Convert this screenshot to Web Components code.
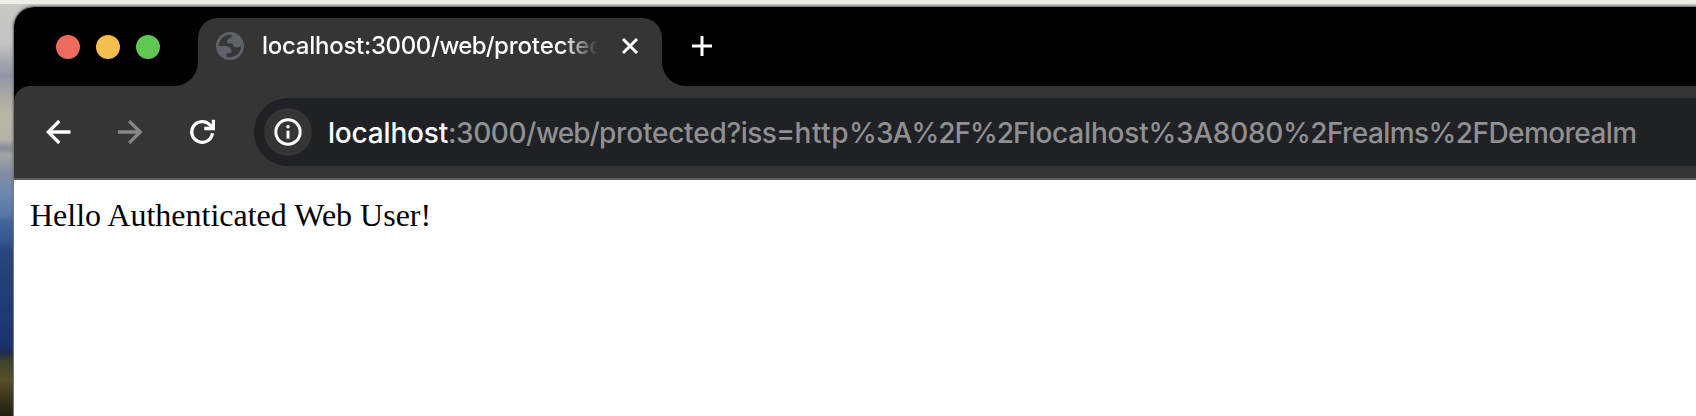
<!DOCTYPE html>
<html lang="en">
<head>
<meta charset="utf-8">
<title>localhost:3000/web/protected</title>
<style>
html,body{margin:0;height:100%;overflow:hidden}
body{font-family:Inter,"Liberation Sans",sans-serif}
</style>
</head>
<body>
<desk-top>
  <browser-window>
    <tab-strip slot="tabs"></tab-strip>
    <tool-bar slot="toolbar"></tool-bar>
    <page-view>Hello Authenticated Web User!</page-view>
  </browser-window>
</desk-top>
<script>
function define(name, html, ready) {
  customElements.define(name, class extends HTMLElement {
    constructor() {
      super();
      this.attachShadow({mode: 'open'}).innerHTML = html;
    }
    connectedCallback() { if (ready) ready(this); }
  });
}

// A run of text tracked so that it takes up the given width.
define('fit-text', '<style>:host{display:inline;white-space:pre}</style><slot></slot>', el => {
  const w = el.getBoundingClientRect().width;
  el.style.letterSpacing = ((+el.getAttribute('width') - w) / el.textContent.length) + 'px';
});

define('traffic-lights', `<style>
:host{display:flex;gap:16px}
i{width:24px;height:24px;border-radius:50%}
i:nth-of-type(1){background:#ed6a5f}
i:nth-of-type(2){background:#f5bf4f}
i:nth-of-type(3){background:#62c655}
</style><i></i><i></i><i></i>`);

define('browser-tab', `<style>
:host{position:relative;display:flex;align-items:center;box-sizing:border-box;width:464px;height:68px;padding:0 0 12px 18px;background:#353535;border-radius:20px 20px 0 0;color:#fff}
:host::before,:host::after{content:"";position:absolute;bottom:0;width:24px;height:24px}
:host::before{right:100%;background:radial-gradient(circle at 0 0,transparent 23.5px,#353535 24.5px)}
:host::after{left:100%;background:radial-gradient(circle at 100% 0,transparent 23.5px,#353535 24.5px)}
.globe{width:28px;height:28px;flex:none}
.title{width:336px;margin-left:18px;overflow:hidden;white-space:nowrap;font-size:24px;line-height:36px;font-weight:450;-webkit-mask:linear-gradient(90deg,#000 300px,transparent 336px);mask:linear-gradient(90deg,#000 300px,transparent 336px)}
.close{width:20px;height:20px;margin-left:22px;flex:none}
</style>
<svg class="globe" viewBox="2 2 20 20"><path fill="#5f6368" fill-rule="evenodd" d="M12 2C6.480 2 2 6.480 2 12s4.480 10 10 10 10-4.480 10-10S17.520 2 12 2zM4 12h4.400c3.407.022 4.922 1.730 4.543 5.127H9.488v2.470a8.004 8.004 0 0 0 10.498-8.083C19.327 12.504 18.332 13 17 13c-2.137 0-3.206-.916-3.206-2.750h-3.748c-.274-2.728.683-4.092 2.870-4.092 0-.975.327-1.597.811-1.970A8.004 8.004 0 0 0 4 12z"/></svg>
<div class="title"><slot></slot></div>
<svg class="close" viewBox="0 0 20 20"><path d="M3 3L17 17M17 3L3 17" stroke="#fff" stroke-width="3"/></svg>`);

define('tab-strip', `<style>
:host{display:flex;box-sizing:border-box;height:79px;padding:11px 0 0 42px;background:#000}
traffic-lights{margin-top:17px}
browser-tab{margin-left:38px}
.new{width:20px;height:20px;margin:18px 0 0 30px}
</style>
<traffic-lights></traffic-lights>
<browser-tab><fit-text width="102">localhost</fit-text><fit-text width="75.5">:3000/</fit-text><fit-text width="54.5">web/</fit-text><fit-text width="110">protected</fit-text></browser-tab>
<svg class="new" viewBox="0 0 20 20"><path d="M10 0V20M0 10H20" stroke="#fff" stroke-width="3"/></svg>`);

define('address-bar', `<style>
:host{display:flex;align-items:center;height:68px;background:#202124;border-radius:34px 0 0 34px;color:#8f9092}
.info{display:flex;align-items:center;justify-content:center;width:48px;height:48px;margin-left:10px;border-radius:50%;background:#353535}
.url{margin:1px 0 0 16px;font-size:28px;line-height:40px;font-weight:450;white-space:nowrap}
.host{color:#fff}
</style>
<span class="info"><svg width="28" height="28" viewBox="0 0 28 28"><circle cx="14" cy="14" r="12.200" fill="none" stroke="#fff" stroke-width="3"/><path d="M14 12.700V20.700" stroke="#fff" stroke-width="3"/><circle cx="14" cy="8.800" r="1.800" fill="#fff"/></svg></span>
<div class="url"><fit-text class="host" width="120">localhost</fit-text><fit-text width="88">:3000/</fit-text><fit-text width="63">web/</fit-text><fit-text width="127.5">protected</fit-text><fit-text width="68">?iss=</fit-text><fit-text width="54.5">http</fit-text><fit-text width="62.5">%3A</fit-text><fit-text width="117">%2F%2F</fit-text><fit-text width="120">localhost</fit-text><fit-text width="134.5">%3A8080</fit-text><fit-text width="145.5">%2Frealms</fit-text><fit-text width="208">%2FDemorealm</fit-text></div>`);

define('tool-bar', `<style>
:host{display:flex;align-items:center;box-sizing:border-box;height:94px;padding-left:32px;background:#353535;border-bottom:2px solid #5f5d60;color:#fff}
svg{flex:none;fill:none;stroke:#fff;stroke-width:3.300}
.fwd{margin-left:47px;stroke:#878787}
.reload{margin-left:47px}
address-bar{flex:1;margin-left:39px}
</style>
<svg width="25" height="24" viewBox="0 0 25 24"><path d="M24.500 12H2.500M13.300 1L2.300 12L13.300 23"/></svg>
<svg class="fwd" width="25" height="24" viewBox="0 0 25 24"><path d="M0 12H22M11.200 1L22.200 12L11.200 23"/></svg>
<svg class="reload" width="25" height="26" viewBox="0 0 25 26"><path d="M22.500 14.300A10.400 10.400 0 1 1 20.200 6.300L22.500 9"/><path d="M23.400 .8V9.500H14.300"/></svg>
<address-bar></address-bar>`);

define('page-view', `<style>
:host{display:block;flex:1;padding:16px;background:#fff;color:#000;font:32px/38px "Liberation Serif",serif}
</style><slot></slot>`);

define('browser-window', `<style>
:host{display:flex;flex-direction:column;flex:1;border-radius:20px 0 0 0;background:#fff;overflow:hidden;box-shadow:0 0 0 1px #777,0 0 3px 1px #5558}
.bar{background:#000}
::slotted(tool-bar){border-top-left-radius:16px}
</style><slot name="tabs"></slot><div class="bar"><slot name="toolbar"></slot></div><slot></slot>`);

define('desk-top', `<style>
:host{display:flex;box-sizing:border-box;height:416px;padding:7px 0 0 14px;background:
linear-gradient(#eeede8,#eeede8) 0 0/100% 4px no-repeat,
linear-gradient(#c9c9c6 0,#c3c3c1 45px,#a3a6b0 62px,#9296a8 76px,#aaa9a4 95px,#bab6a7 115px,#b4b1a6 140px,#858b99 148px,#a3a5a4 155px,#7f8ba0 175px,#7089b0 190px,#5677a8 215px,#40649a 222px,#355892 240px,#294780 250px,#243f78 280px,#203b78 305px,#1b3270 345px,#1e2c50 352px,#40432d 362px,#57502a 380px,#38331a 400px,#211e0f 416px)}
</style><slot></slot>`);
</script>
</body>
</html>
